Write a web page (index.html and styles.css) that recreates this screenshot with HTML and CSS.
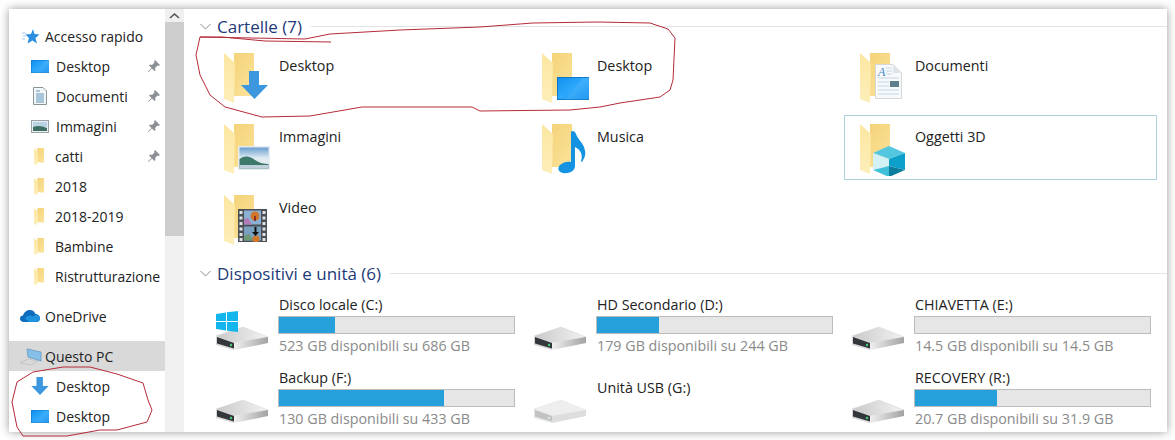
FILE: index.html
```html
<!DOCTYPE html>
<html lang="it">
<head>
<meta charset="utf-8">
<title>Questo PC</title>
<link rel="stylesheet" href="styles.css">
</head>
<body>
<svg class="defs" width="0" height="0" aria-hidden="true">
  <defs>
    <linearGradient id="gBack" x1="0" y1="0" x2="1" y2="1"><stop offset="0" stop-color="#f3cf72"/><stop offset="1" stop-color="#fbe49c"/></linearGradient>
    <linearGradient id="gFlap" x1="0" y1="0" x2="0" y2="1"><stop offset="0" stop-color="#fce7a2"/><stop offset="1" stop-color="#fdeeb9"/></linearGradient>
    <linearGradient id="gBlue" x1="0" y1="0" x2="1" y2="1"><stop offset="0" stop-color="#0f8fee"/><stop offset=".5" stop-color="#2ea8fb"/><stop offset="1" stop-color="#0f90f0"/></linearGradient>
    <linearGradient id="gSky" x1="0" y1="0" x2="0" y2="1"><stop offset="0" stop-color="#6a9fd0"/><stop offset=".5" stop-color="#dfeaf2"/><stop offset="1" stop-color="#e8eef0"/></linearGradient>
    <linearGradient id="gTop" x1="0" y1="0" x2="1" y2="0"><stop offset="0" stop-color="#c9c9c9"/><stop offset=".6" stop-color="#e2e2e2"/><stop offset="1" stop-color="#f2f2f2"/></linearGradient>
    <linearGradient id="gSide" x1="0" y1="0" x2="1" y2="0"><stop offset="0" stop-color="#f0f0f0"/><stop offset="1" stop-color="#a2a2a2"/></linearGradient>
    <symbol id="folder" viewBox="0 0 48 52">
      <path d="M0 0H30V43H10V0Z" fill="url(#gBack)"/>
      <path d="M10 43H18L11 51Z" fill="#fff"/>
      <path d="M0 0L11 10L10 50L0 46Z" fill="url(#gFlap)"/>
    </symbol>
    <symbol id="dl" viewBox="0 0 48 52">
      <path d="M25 18H35V32H44L30.500 46L17 32H25Z" fill="#3c97de"/>
    </symbol>
    <symbol id="screen" viewBox="0 0 32 23">
      <rect width="32" height="23" fill="url(#gBlue)"/>
      <path d="M0 0H32V1H1V22H32V23H0Z" fill="#0a68b0" opacity=".7"/>
      <path d="M8 23L26 1H32V23Z" fill="#fff" opacity=".08"/>
    </symbol>
    <symbol id="mus" viewBox="0 0 48 52">
      <path d="M29 8C30 6 33 7 34 10C36 16 42 19 43 27C44 31 42 35 40 38L39 37C41 31 39 26 33 23V42C33 47 27 50 21 49C16 48 15 44 18 41C21 38 26 37 29 38Z" fill="#1393e2"/>
    </symbol>
    <symbol id="pic" viewBox="0 0 32 24">
      <rect width="32" height="24" fill="#e6ecf0"/>
      <rect x="1.500" y="1.500" width="29" height="21" fill="url(#gSky)"/>
      <path d="M1.500 13C7 9 12 10 17 14C22 17 26 18 30.500 18V22.500H1.500Z" fill="#3e7a6c"/>
      <path d="M1.500 19H30.500V22.500H1.500Z" fill="#bfd0da"/>
    </symbol>
    <symbol id="film" viewBox="0 0 29 33">
      <rect width="29" height="33" fill="#4a4f55"/>
      <rect x="6" y="1.500" width="17" height="14" fill="#8ab0d4"/>
      <rect x="6" y="17.500" width="17" height="14" fill="#7aa0c0"/>
      <path d="M6 15.500V10L10 9L14 15.500Z" fill="#b07cb8"/>
      <path d="M6 31.500V27L11 25L16 31.500Z" fill="#6f9a78"/>
      <circle cx="17" cy="7" r="4.500" fill="#d0772c"/>
      <path d="M16 7H18V12H16Z" fill="#8b2f20"/>
      <circle cx="18" cy="30" r="3.500" fill="#d0772c"/>
      <path d="M16.500 18H18.500V23H21L17.500 27L14 23H16.500Z" fill="#111"/>
      <path d="M1.500 2h3v3h-3zM1.500 7.500h3v3h-3zM1.500 13h3v3h-3zM1.500 18.500h3v3h-3zM1.500 24h3v3h-3zM1.500 29h3v3h-3z" fill="#dfe3e6"/>
      <path d="M24.500 2h3v3h-3zM24.500 7.500h3v3h-3zM24.500 13h3v3h-3zM24.500 18.500h3v3h-3zM24.500 24h3v3h-3zM24.500 29h3v3h-3z" fill="#dfe3e6"/>
    </symbol>
    <symbol id="doc" viewBox="0 0 27 35">
      <path d="M.5.500H18L26.500 9V34.500H.5Z" fill="#f7f9fb" stroke="#d3d8dc"/>
      <path d="M18 .5V9H26.500Z" fill="#dfe4e8"/>
      <path d="M3 14H24M3 18H14M3 22H14M3 26H24M3 30H24" stroke="#c4d6e6"/>
      <path d="M11 4H17M11 7H17M11 10H17" stroke="#c4d6e6"/>
      <text x="3" y="12" class="docA">A</text>
      <rect x="15" y="17" width="9" height="6" fill="#5d7f8c"/>
    </symbol>
    <symbol id="cube" viewBox="0 0 32 31">
      <path d="M16 0L32 7L16 13L0 7Z" fill="#52c7df"/>
      <path d="M0 7L16 13V20L0 24Z" fill="#d3f0f5"/>
      <path d="M32 7L16 13V20L32 24Z" fill="#0c9fc9"/>
      <path d="M0 24L16 20V31Z" fill="#3fc0d8"/>
      <path d="M32 24L16 20V31Z" fill="#0b7d9e"/>
    </symbol>
    <symbol id="drive" viewBox="0 0 52 42">
      <path d="M0 25L27 16L52 26L18 32Z" fill="url(#gTop)" stroke="#d4d4d4" stroke-width=".5"/>
      <path d="M18 32L52 26V32L18 39Z" fill="url(#gSide)"/>
      <path d="M0 25L18 32V39L0 34Z" fill="#d8d8d8"/>
      <path d="M1 26L18 32V37.500L1 32.500Z" fill="#33363a"/>
      <circle cx="15" cy="34" r="1.200" fill="#3fd07a"/>
    </symbol>
    <symbol id="driveLight" viewBox="0 0 52 42">
      <path d="M0 25L27 16L52 26L18 32Z" fill="#eeeeee" stroke="#e2e2e2" stroke-width=".5"/>
      <path d="M18 32L52 26V32L18 39Z" fill="#dddddd"/>
      <path d="M0 25L18 32V39L0 34Z" fill="#e6e6e6"/>
      <path d="M1 26L18 32V37.500L1 32.500Z" fill="#c2c2c2"/>
      <circle cx="15" cy="34" r="1.200" fill="#d5ead9"/>
    </symbol>
    <symbol id="win" viewBox="0 0 22 21">
      <path d="M0 3L10 1.500V10H0ZM11 1.300L22 0V10H11ZM0 11H10V19.500L0 18ZM11 11H22V21L11 19.700Z" fill="#12b6ec"/>
    </symbol>
    <symbol id="pin" viewBox="0 0 14 14">
      <path d="M8 1L13 6L11.500 7L10.500 6.500L8 9L8.500 11L7.500 12L5 9.500L1.500 13L1 12.500L4.500 9L2 6.500L3 5.500L5 6L7.500 3.500L7 2.500Z" fill="#8b9096"/>
    </symbol>
  </defs>
</svg>

<div class="window">
  <nav class="nav">
    <div class="nav-item root"><svg class="ni star" width="18" height="15" viewBox="0 0 18 15"><path d="M11 0L12.500 5L17.500 5.500L13.500 9L15 14.500L10.500 11.500L5.500 14.500L7 9L3.500 5.500L9 5Z" fill="#2a8fe0"/><path d="M0 4H4M1 7H4M0 10H3" stroke="#a8cdee"/></svg><span>Accesso rapido</span></div>
    <div class="nav-item"><svg class="ni" width="18" height="13"><use href="#screen"/></svg><span>Desktop</span><svg class="pin"><use href="#pin"/></svg></div>
    <div class="nav-item"><svg class="ni" width="18" height="18" viewBox="0 0 18 18"><path d="M2.500.500H12L15.500 4V17.500H2.500Z" fill="#f4f7f9" stroke="#8b9499"/><path d="M5 4H9M5 7H13M5 9H13M5 11H13M5 13H13M5 15H13" stroke="#5f93b8"/></svg><span>Documenti</span><svg class="pin"><use href="#pin"/></svg></div>
    <div class="nav-item"><svg class="ni" width="18" height="13" viewBox="0 0 18 13"><rect x=".5" y=".5" width="17" height="12" fill="#e8eef2" stroke="#9aa3a8"/><path d="M2 2H16V7H2Z" fill="#b9d2e4"/><path d="M2 7C7 5 11 6 16 8V11H2Z" fill="#3f6f62"/></svg><span>Immagini</span><svg class="pin"><use href="#pin"/></svg></div>
    <div class="nav-item"><svg class="ni nf" width="12" height="17" viewBox="0 0 30 50"><use href="#folder" width="48" height="52"/></svg><span>catti</span><svg class="pin"><use href="#pin"/></svg></div>
    <div class="nav-item"><svg class="ni nf" width="12" height="17" viewBox="0 0 30 50"><use href="#folder" width="48" height="52"/></svg><span>2018</span></div>
    <div class="nav-item"><svg class="ni nf" width="12" height="17" viewBox="0 0 30 50"><use href="#folder" width="48" height="52"/></svg><span>2018-2019</span></div>
    <div class="nav-item"><svg class="ni nf" width="12" height="17" viewBox="0 0 30 50"><use href="#folder" width="48" height="52"/></svg><span>Bambine</span></div>
    <div class="nav-item"><svg class="ni nf" width="12" height="17" viewBox="0 0 30 50"><use href="#folder" width="48" height="52"/></svg><span>Ristrutturazione</span></div>
    <div class="nav-item root spaced"><svg class="ni" width="20" height="12" viewBox="0 0 20 12"><path d="M4 12C1.500 12 0 10.500 0 8.500C0 6.500 1.500 5.500 3 5.500C4 2 7 0 10 0C12.500 0 14.500 1.500 15.500 4C18 4 20 6 20 8.500C20 10.500 18.500 12 16.500 12Z" fill="#0f6cbd"/><path d="M9 12L5 8.500C6.500 5.500 10 4.500 13 6.500C15 4.500 18 4.500 19.500 6.500C20.500 9 19 12 16.500 12Z" fill="#1f93de"/></svg><span>OneDrive</span></div>
    <div class="nav-item root spaced active"><svg class="ni" width="22" height="20" viewBox="0 0 22 20"><path d="M7 3L21 6V15L8 11Z" fill="#86c0e8" stroke="#5b93c0" stroke-width=".7"/><path d="M0 17L8 13L18 15L11 19Z" fill="none" stroke="#b8b8b8" stroke-width=".6"/></svg><span>Questo PC</span></div>
    <div class="nav-item"><svg class="ni" width="18" height="18" viewBox="17 18 27 28"><use href="#dl" width="48" height="52"/></svg><span>Desktop</span></div>
    <div class="nav-item"><svg class="ni" width="18" height="13"><use href="#screen"/></svg><span>Desktop</span></div>
  </nav>
  <div class="scrollbar">
    <div class="scroll-up"><svg width="11" height="6" viewBox="0 0 11 6"><path d="M1 5L5.500 1L10 5" fill="none" stroke="#505050" stroke-width="1.500"/></svg></div>
    <div class="scroll-thumb"></div>
  </div>
  <main class="content">
    <div class="group-head">
      <svg class="chev" width="11" height="7" viewBox="0 0 11 7"><path d="M.5 1L5.500 6L10.500 1" fill="none" stroke="#8a8a8a"/></svg>
      <span class="group-title">Cartelle (7)</span><span class="group-line"></span>
    </div>
    <div class="folders">
      <div class="tile"><svg class="ficon"><use href="#folder"/><use href="#dl"/></svg><span>Desktop</span></div>
      <div class="tile"><svg class="ficon"><use href="#folder"/><use href="#screen" x="15" y="24" width="32" height="23"/></svg><span>Desktop</span></div>
      <div class="tile"><svg class="ficon"><use href="#folder"/><use href="#doc" x="15" y="11" width="27" height="35"/></svg><span>Documenti</span></div>
      <div class="tile"><svg class="ficon"><use href="#folder"/><use href="#pic" x="14" y="22" width="32" height="24"/></svg><span>Immagini</span></div>
      <div class="tile"><svg class="ficon"><use href="#folder"/><use href="#mus"/></svg><span>Musica</span></div>
      <div class="tile focused"><svg class="ficon"><use href="#folder"/><use href="#cube" x="13" y="22" width="32" height="31"/></svg><span>Oggetti 3D</span></div>
      <div class="tile"><svg class="ficon"><use href="#folder"/><use href="#film" x="14" y="14" width="29" height="33"/></svg><span>Video</span></div>
    </div>
    <div class="group-head second">
      <svg class="chev" width="11" height="7" viewBox="0 0 11 7"><path d="M.5 1L5.500 6L10.500 1" fill="none" stroke="#8a8a8a"/></svg>
      <span class="group-title">Dispositivi e unità (6)</span><span class="group-line"></span>
    </div>
    <div class="drives">
      <div class="drive"><svg class="dicon"><use href="#drive"/><use href="#win" width="22" height="21"/></svg><div class="dinfo"><div class="dname">Disco locale (C:)</div><div class="bar"><div class="fill" style="width:24%"></div></div><div class="dfree">523 GB disponibili su 686 GB</div></div></div>
      <div class="drive"><svg class="dicon"><use href="#drive"/></svg><div class="dinfo"><div class="dname">HD Secondario (D:)</div><div class="bar"><div class="fill" style="width:26.500%"></div></div><div class="dfree">179 GB disponibili su 244 GB</div></div></div>
      <div class="drive"><svg class="dicon"><use href="#drive"/></svg><div class="dinfo"><div class="dname">CHIAVETTA (E:)</div><div class="bar"></div><div class="dfree">14.5 GB disponibili su 14.5 GB</div></div></div>
      <div class="drive"><svg class="dicon"><use href="#drive"/></svg><div class="dinfo"><div class="dname">Backup (F:)</div><div class="bar"><div class="fill" style="width:70%"></div></div><div class="dfree">130 GB disponibili su 433 GB</div></div></div>
      <div class="drive"><svg class="dicon"><use href="#driveLight"/></svg><div class="dinfo usb"><div class="dname">Unità USB (G:)</div></div></div>
      <div class="drive"><svg class="dicon"><use href="#drive"/></svg><div class="dinfo"><div class="dname">RECOVERY (R:)</div><div class="bar"><div class="fill" style="width:35%"></div></div><div class="dfree">20.7 GB disponibili su 31.9 GB</div></div></div>
    </div>
  </main>
</div>

<svg class="ink" width="1175" height="440" viewBox="0 0 1175 440" aria-hidden="true">
  <path d="M200 37L222 37L265 41L331 42M305 39L330 34L400 30L480 27L533 23L597 22L650 23L668 29L675 38L673 80L670 90L660 97L620 103L600 107L570 110L480 111L472 107L362 107L310 116L262 117L225 107L210 95L200 75L196 55L200 37Z" />
  <path d="M17 382L33 372L63 367L90 367L117 374L143 383L148 400L152 410L147 422L117 430L100 430L67 436L23 436L17 427L12 402Z" />
</svg>
</body>
</html>
```
FILE: styles.css
```css
* { box-sizing: border-box; }
html, body { margin: 0; height: 100%; background: #fff; overflow: hidden; }
body { font-family: "Open Sans", "Noto Sans", "Liberation Sans", sans-serif; font-size: 14.3px; color: #222; }
.defs { display: block; height: 0; }
.window {
  margin: 9px 8px 0 9px;
  height: 423px;
  display: flex;
  background: #fff;
  box-shadow: 0 0 9px rgba(0, 0, 0, .4);
  overflow: hidden;
}
.nav { width: 156px; flex: none; padding-top: 12px; overflow: hidden; font-size: 14px; }
.nav-item { height: 30px; display: flex; align-items: center; padding-left: 22px; white-space: nowrap; }
.nav-item .ni { flex: none; margin-right: 7px; }
.nav-item .nf { margin-left: 2px; margin-right: 10px; }
.nav-item.root { display: grid; grid-template-columns: 25px 1fr; padding-left: 11px; }
.nav-item.root .ni { margin-right: 0; }
.nav-item.root .star { margin-left: 2px; }
.nav-item.spaced { margin-top: 10px; }
.nav-item.active { background: #d9d9d9; }
.pin { width: 14px; height: 14px; margin-left: auto; margin-right: 4px; flex: none; }
.scrollbar { width: 19px; flex: none; background: #f0f0f0; }
.scroll-up { height: 13px; display: flex; align-items: center; justify-content: center; }
.scroll-thumb { height: 214px; background: #cdcdcd; }
.content { flex: 1; min-width: 0; margin-left: 1px; padding: 6px 0 0 15px; overflow: hidden; }
.group-head { height: 22px; display: flex; align-items: center; }
.group-head.second { margin-top: 11px; }
.chev { flex: none; margin-right: 6px; }
.group-title { font-size: 17px; color: #1e3a78; white-space: nowrap; }
.group-line { flex: 1; height: 1px; background: #e3e3e3; margin-left: 9px; }
.folders, .drives { display: grid; grid-template-columns: repeat(3, 313px); column-gap: 5px; margin-left: 8px; }
.folders { margin-top: 7px; grid-auto-rows: 65px; row-gap: 6px; }
.drives { margin-top: 11px; grid-auto-rows: 60px; row-gap: 13px; }
.tile { display: flex; align-items: flex-start; padding: 8px 0 0 15px; border: 1px solid transparent; }
.tile span { margin: 3px 0 0 7px; line-height: 20px; }
.tile.focused { border-color: #b0d2e0; }
.ficon { width: 48px; height: 52px; flex: none; }
.drive { display: flex; align-items: flex-start; }
.dicon { width: 52px; height: 42px; margin: 16px 0 0 8px; flex: none; }
.dinfo { margin-left: 10px; flex: 1; min-width: 0; padding-right: 6px; }
.dinfo.usb { padding-top: 10px; }
.dname { line-height: 20px; padding-left: 1px; white-space: nowrap; }
.bar { height: 18px; margin-top: 1px; background: #e6e6e6; border: 1px solid #bcbcbc; }
.fill { height: 100%; background: #26a0da; }
.dfree { line-height: 21px; padding: 1px 0 0 1px; color: #8a8a8a; white-space: nowrap; }
.docA { font-family: "Liberation Serif", serif; font-style: italic; font-size: 12px; fill: #3e86c4; }
.ink { position: absolute; left: 0; top: 0; pointer-events: none; }
.ink path { fill: none; stroke: #b52a3a; stroke-width: 1; }
```
